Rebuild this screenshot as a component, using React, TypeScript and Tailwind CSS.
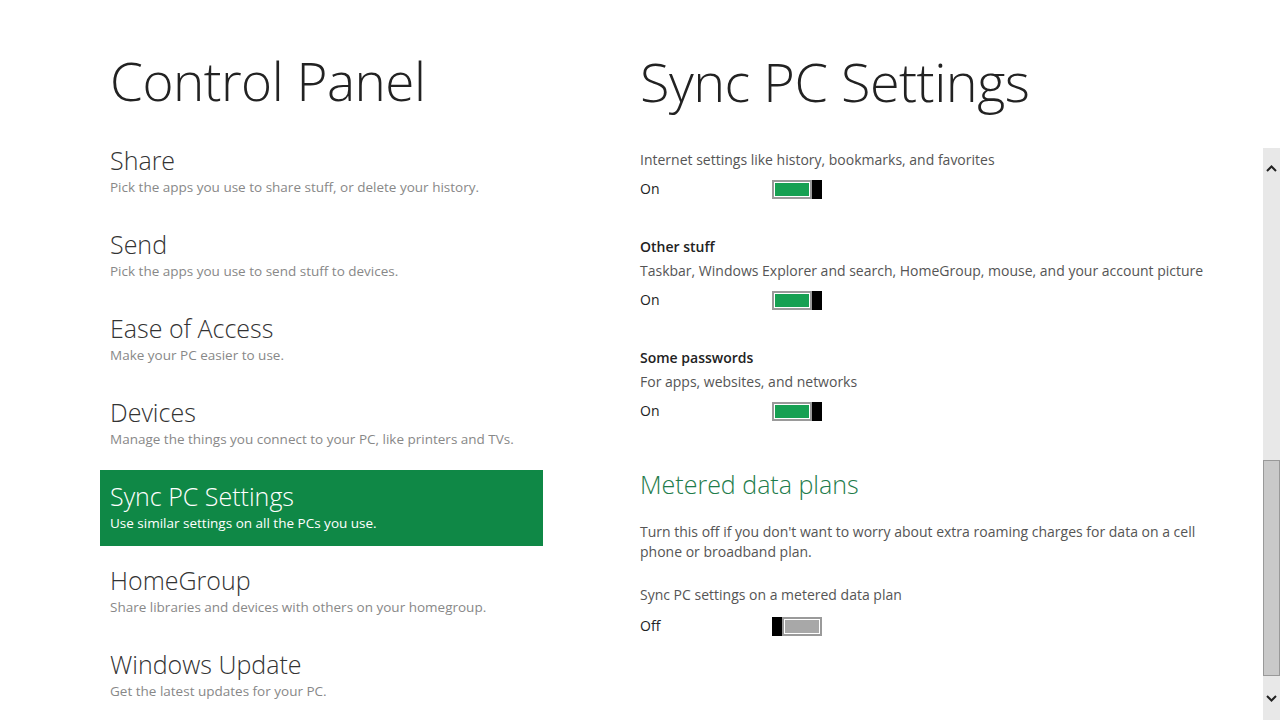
import React from "react";

interface NavItem {
  title: string;
  desc: string;
  active?: boolean;
}

const NAV: NavItem[] = [
  { title: "Share", desc: "Pick the apps you use to share stuff, or delete your history." },
  { title: "Send", desc: "Pick the apps you use to send stuff to devices." },
  { title: "Ease of Access", desc: "Make your PC easier to use." },
  { title: "Devices", desc: "Manage the things you connect to your PC, like printers and TVs." },
  { title: "Sync PC Settings", desc: "Use similar settings on all the PCs you use.", active: true },
  { title: "HomeGroup", desc: "Share libraries and devices with others on your homegroup." },
  { title: "Windows Update", desc: "Get the latest updates for your PC." },
];

function Toggle({ on }: { on: boolean }) {
  return (
    <div className="flex h-[19px] w-[50px]">
      {!on && <div className="h-full w-[10px] bg-black" />}
      <div className="flex-1 border-2 border-[#9a9a9a] bg-white p-px">
        <div className={`h-full w-full ${on ? "bg-[#16a052]" : "bg-[#a8a8a8]"}`} />
      </div>
      {on && <div className="h-full w-[10px] bg-black" />}
    </div>
  );
}

function ToggleRow({ on, className = "mt-[9px]" }: { on: boolean; className?: string }) {
  return (
    <div className={`flex items-center ${className}`}>
      <span className="w-[132px] text-[14px] text-[#222]">{on ? "On" : "Off"}</span>
      <Toggle on={on} />
    </div>
  );
}

export default function App() {
  return (
    <div
      className="flex h-[720px] w-[1280px] overflow-hidden bg-white"
      style={{ fontFamily: '"Open Sans", "Liberation Sans", sans-serif' }}
    >
      {/* Left nav */}
      <div className="w-[540px] shrink-0 pl-[100px] pt-[46px]">
        <h1 className="pl-[10px] text-[53px] font-light leading-[70px] tracking-[-0.5px] text-[#222]">
          Control Panel
        </h1>
        <div className="mt-[18px] flex w-[443px] flex-col gap-[8px]">
          {NAV.map((item) => (
            <div
              key={item.title}
              className={`h-[76px] px-[10px] pt-[9px] ${item.active ? "bg-[#0f8846] text-white" : ""}`}
            >
              <div className={`text-[25px] font-light leading-[34px] ${item.active ? "text-white" : "text-[#333]"}`}>
                {item.title}
              </div>
              <div className={`text-[13.5px] leading-[20px] ${item.active ? "text-white" : "text-[#888]"}`}>
                {item.desc}
              </div>
            </div>
          ))}
        </div>
      </div>

      {/* Right content */}
      <div className="flex-1 pl-[100px] pt-[46px]">
        <h1 className="text-[54px] font-light leading-[70px] tracking-[-0.5px] text-[#222]">
          Sync PC Settings
        </h1>
        <div className="mt-[34px] w-[575px] text-[14px] leading-[20px] text-[#555]">
          <p>Internet settings like history, bookmarks, and favorites</p>
          <ToggleRow on />

          <p className="mt-[38px] font-semibold text-[#222]">Other stuff</p>
          <p className="mt-[4px]">Taskbar, Windows Explorer and search, HomeGroup, mouse, and your account picture</p>
          <ToggleRow on />

          <p className="mt-[38px] font-semibold text-[#222]">Some passwords</p>
          <p className="mt-[4px]">For apps, websites, and networks</p>
          <ToggleRow on />

          <h2 className="mt-[46px] text-[25px] font-light leading-[34px] text-[#1e7c4b]">Metered data plans</h2>
          <p className="mt-[21px]">
            Turn this off if you don't want to worry about extra roaming charges for data on a cell phone or
            broadband plan.
          </p>
          <p className="mt-[23px]">Sync PC settings on a metered data plan</p>
          <ToggleRow on={false} className="mt-[11px]" />
        </div>
      </div>

      {/* Scrollbar */}
      <div className="mt-[148px] flex w-[17px] shrink-0 flex-col bg-[#e8e8e8]">
        <div className="flex h-[40px] items-center justify-center">
          <svg width="11" height="7" viewBox="0 0 11 7">
            <path d="M1 6 L5.5 1.5 L10 6" fill="none" stroke="#222" strokeWidth="2" />
          </svg>
        </div>
        <div className="h-[272px]" />
        <div className="h-[216px] border border-[#999] bg-[#c9c9c9]" />
        <div className="flex flex-1 items-center justify-center">
          <svg width="11" height="7" viewBox="0 0 11 7">
            <path d="M1 1 L5.5 5.5 L10 1" fill="none" stroke="#222" strokeWidth="2" />
          </svg>
        </div>
      </div>
    </div>
  );
}
